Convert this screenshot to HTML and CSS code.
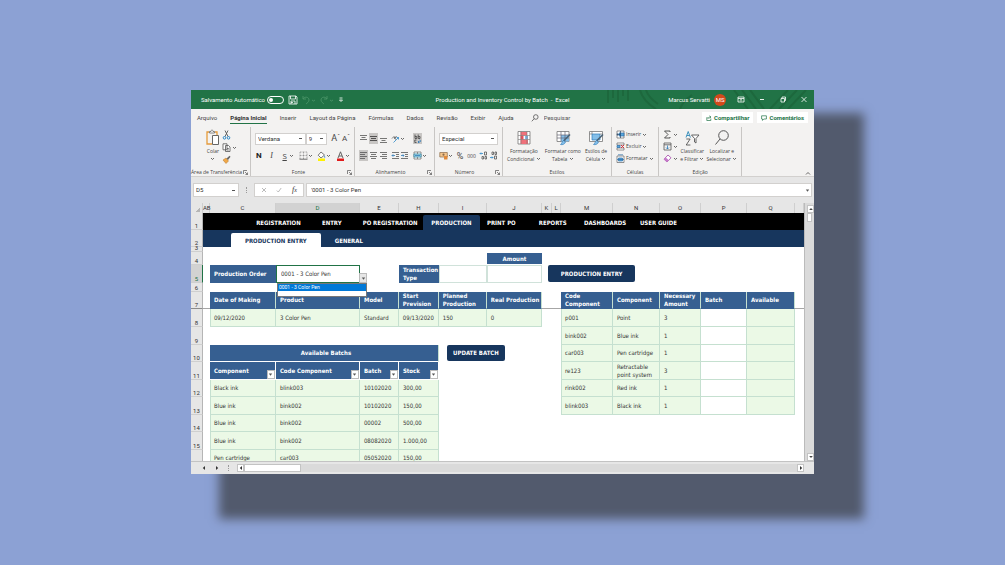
FILE: index.html
```
<!DOCTYPE html>
<html lang="pt-BR">
<head>
<meta charset="utf-8">
<title>Production and Inventory Control by Batch - Excel</title>
<link rel="stylesheet" href="styles.css">
</head>
<body>
<svg class="defs" aria-hidden="true">
  <symbol id="chev" viewBox="0 0 5 5"><path d="M1 2l1.500 1.500L4 2" fill="none" stroke="#444" stroke-width=".8"/></symbol>
  <symbol id="tri" viewBox="0 0 5 5"><path d="M.8 1.500h3.400L2.500 3.800z" fill="#555"/></symbol>
  <symbol id="launch" viewBox="0 0 5 5"><path d="M.5 4V.5H4M2 2l2.500 2.500M4.500 2.500v2h-2" fill="none" stroke="#555" stroke-width=".7"/></symbol>
  <symbol id="left" viewBox="0 0 6 6"><path d="M4 1v4L1.800 3z" fill="#333"/></symbol>
  <symbol id="right" viewBox="0 0 6 6"><path d="M2 1v4l2.200-2z" fill="#333"/></symbol>
  <symbol id="up" viewBox="0 0 6 6"><path d="M1.200 4h3.600L3 2z" fill="#444"/></symbol>
  <symbol id="down" viewBox="0 0 6 6"><path d="M1.200 2h3.600L3 4z" fill="#444"/></symbol>
  <symbol id="al-l" viewBox="0 0 9 9"><path d="M1 1.500h7M1 3.500h5M1 5.500h7M1 7.500h5" stroke="#555" stroke-width=".8"/></symbol>
  <symbol id="al-c" viewBox="0 0 9 9"><path d="M1 1.500h7M2 3.500h5M1 5.500h7M2 7.500h5" stroke="#555" stroke-width=".8"/></symbol>
  <symbol id="al-r" viewBox="0 0 9 9"><path d="M1 1.500h7M3 3.500h5M1 5.500h7M3 7.500h5" stroke="#555" stroke-width=".8"/></symbol>
  <symbol id="va-t" viewBox="0 0 9 9"><path d="M1 1.500h7M2.500 3.500h4M1 5.500h7" stroke="#555" stroke-width=".8"/></symbol>
  <symbol id="va-m" viewBox="0 0 9 9"><path d="M1 2.500h7M2 4.500h5M1 6.500h7" stroke="#444" stroke-width=".9"/></symbol>
  <symbol id="va-b" viewBox="0 0 9 9"><path d="M1 4.500h7M2.500 6.500h4M1 8.500h7" stroke="#555" stroke-width=".8"/></symbol>
</svg>

<main class="window">
  <header class="titlebar">
    <div class="quick">
      <label class="autosave">Salvamento Automático <input type="checkbox" class="toggle"></label>
      <button class="plain" aria-label="Salvar"><svg width="10" height="10" viewBox="0 0 10 10" fill="none" stroke="#fff" stroke-width=".8"><path d="M1 1h7l1 1v7H1zM2.500 1v3h5V1M3 9V6h4v3M3 7.500h2"/></svg></button>
      <button class="plain" aria-label="Desfazer"><svg width="14" height="10" viewBox="0 0 14 10" fill="none" stroke="#4a9468" stroke-width=".9"><path d="M1 1v3h3M1 4c2-3 6-2 6 1 0 2-2 3-3 4M10 5l1.500 1L13 5"/></svg></button>
      <button class="plain" aria-label="Refazer"><svg width="14" height="10" viewBox="0 0 14 10" fill="none" stroke="#4a9468" stroke-width=".9"><path d="M7 1v3H4M7 4C5 1 1 2 1 5c0 2 2 3 3 4M10 5l1.500 1L13 5"/></svg></button>
      <button class="plain" aria-label="Personalizar"><svg width="6" height="6" viewBox="0 0 6 6" fill="none" stroke="#fff" stroke-width=".8"><path d="M1.500 1h3M1.500 3L3 4.500 4.500 3z"/></svg></button>
    </div>
    <h1 class="doc">Production and Inventory Control by Batch &nbsp;-&nbsp; Excel</h1>
    <div class="account">
      <svg class="pattern" viewBox="0 0 210 19" fill="none" stroke="#1d683d" stroke-width="2"><path d="M4 0v13M9 0v8M14 0v12M19 0v6M24 0v11M36 0c2 8 8 14 16 19M42 0c2 6 6 10 12 14M76 19c2-6 6-10 12-14M130 0l14 19M138 0l14 19M146 0l14 19M166 19L184 0M175 19L193 0M184 19L202 0"/></svg>
      <span>Marcus Servatti</span><span class="avatar">MS</span>
      <div class="winbtns">
        <button class="plain" aria-label="Opções da faixa"><svg width="8" height="7" viewBox="0 0 8 7" fill="none" stroke="#fff" stroke-width=".8"><path d="M1 1h6v5H1zM1 2.500h6M4 5.500V3.500M3 4.300l1-1 1 1"/></svg></button>
        <button class="plain" aria-label="Minimizar"><svg width="8" height="7" viewBox="0 0 8 7" stroke="#fff" stroke-width=".9"><path d="M2 3.500h4"/></svg></button>
        <button class="plain" aria-label="Restaurar"><svg width="8" height="7" viewBox="0 0 8 7" fill="none" stroke="#fff" stroke-width=".8"><path d="M2 2.500h3.500V6H2zM3 2.500V1h3.500v3.500h-1"/></svg></button>
        <button class="plain" aria-label="Fechar"><svg width="8" height="7" viewBox="0 0 8 7" stroke="#fff" stroke-width=".8"><path d="M1.500 1l5 5M6.500 1l-5 5"/></svg></button>
      </div>
    </div>
  </header>

  <nav class="tabs">
    <a href="#">Arquivo</a><a href="#" class="on">Página Inicial</a><a href="#">Inserir</a><a href="#">Layout da Página</a><a href="#">Fórmulas</a><a href="#">Dados</a><a href="#">Revisão</a><a href="#">Exibir</a><a href="#">Ajuda</a>
    <label class="search"><svg width="8" height="8" viewBox="0 0 8 8" fill="none" stroke="#555" stroke-width=".8"><circle cx="4.800" cy="3" r="2.300"/><path d="M3.200 4.700L.8 7.300"/></svg><input type="text" placeholder="Pesquisar" aria-label="Pesquisar"></label>
    <button class="pill"><svg width="6" height="6" viewBox="0 0 6 6" fill="none" stroke="#217346" stroke-width=".7"><path d="M1.500 2.500H.8v3h4v-2M2 4c0-1.500 1-2 2.500-2M3.500.8L5 2 3.500 3.200"/></svg>Compartilhar</button>
    <button class="pill"><svg width="6" height="6" viewBox="0 0 6 6" fill="none" stroke="#217346" stroke-width=".7"><path d="M.6.8h4.800v3.200H2.800L1.500 5.400V4H.6z"/></svg>Comentários</button>
  </nav>

  <section class="ribbon">
    <div class="group">
      <div class="body clip">
        <button class="big"><svg width="16" height="17" viewBox="0 0 16 17" fill="none"><path d="M4 3H2v12h5M10 3h2v3" stroke="#e59b3c" stroke-width="1.300"/><path d="M4.500 4V2.500H6C6 .5 8 .5 8 2.500h1.500V4z" stroke="#666" stroke-width=".8" fill="#fff"/><path d="M7.500 6.500h6v9h-6z" fill="#fff" stroke="#666"/></svg>Colar<svg class="cv"><use href="#chev"/></svg></button>
        <div class="stack">
          <button class="ico" aria-label="Recortar"><svg width="9" height="10" viewBox="0 0 9 10" fill="none"><path d="M3 .5l3 6M6 .5l-3 6" stroke="#555" stroke-width=".9"/><circle cx="2.500" cy="7.800" r="1.300" stroke="#2b88c8"/><circle cx="6.500" cy="7.800" r="1.300" stroke="#2b88c8"/></svg></button>
          <button class="ico" aria-label="Copiar"><svg width="9" height="9" viewBox="0 0 9 9" fill="#fff" stroke="#555" stroke-width=".8"><path d="M1 .8h4v6H1zM3.500 2.500h3l1.500 1.500v4.500H3.500zM5 5.500h1.800M5 7h1.800"/></svg><svg class="cv"><use href="#chev"/></svg></button>
          <button class="ico" aria-label="Pincel"><svg width="9" height="9" viewBox="0 0 9 9"><path d="M1 5l3-2 2.500 3L4 8.500z" fill="#f0a848" stroke="#b57426" stroke-width=".5"/><path d="M4.500 3.500L7.500.8l1 1-2.500 3.200z" fill="#666"/></svg></button>
        </div>
      </div>
      <div class="glabel">Área de Transferência<svg class="ln"><use href="#launch"/></svg></div>
    </div>

    <div class="group">
      <div class="body">
        <div class="row fontrow">
          <select class="sel wide" aria-label="Fonte"><option>Verdana</option></select>
          <select class="sel narrow" aria-label="Tamanho"><option>9</option></select>
          <button class="ico grow" aria-label="Aumentar fonte">A<sup>ˆ</sup></button>
          <button class="ico shrink" aria-label="Diminuir fonte">A<sup>ˇ</sup></button>
        </div>
        <div class="row spread">
          <button class="ico b">N</button><button class="ico i">I</button>
          <button class="ico"><span class="u">S</span><svg class="cv"><use href="#chev"/></svg></button>
          <button class="ico" aria-label="Bordas"><svg width="9" height="9" viewBox="0 0 9 9" fill="none" stroke="#888" stroke-width=".7"><path d="M1 1h7v7M1 1v7M4.500 1v7M1 4.500h7" stroke-dasharray="1 .5"/><path d="M.5 8.200h8" stroke="#333"/></svg><svg class="cv"><use href="#chev"/></svg></button>
          <button class="ico" aria-label="Preenchimento"><svg width="9" height="10" viewBox="0 0 9 10"><path d="M4 1l3.500 3L4 7 1.200 4.200z" fill="#fff" stroke="#555" stroke-width=".8"/><path d="M7.500 4.500c1 1.500 1 2 .3 2.300-.8-.3-.8-.8-.3-2.300" fill="#2b88c8"/><path d="M1 7.500h7V10H1z" fill="#fff200"/></svg><svg class="cv"><use href="#chev"/></svg></button>
          <button class="ico" aria-label="Cor da fonte"><svg width="9" height="10" viewBox="0 0 9 10"><path d="M2 7L4.500.8 7 7M3 5h3" fill="none" stroke="#555" stroke-width=".9"/><path d="M1 7.500h7V10H1z" fill="#e11b1b"/></svg><svg class="cv"><use href="#chev"/></svg></button>
        </div>
      </div>
      <div class="glabel">Fonte<svg class="ln"><use href="#launch"/></svg></div>
    </div>

    <div class="group">
      <div class="body">
        <div class="row spread">
          <div class="trio"><button class="ico" aria-label="Superior"><svg width="9" height="9"><use href="#va-t"/></svg></button><button class="ico lit" aria-label="Meio"><svg width="9" height="9"><use href="#va-m"/></svg></button><button class="ico" aria-label="Inferior"><svg width="9" height="9"><use href="#va-b"/></svg></button></div>
          <div class="pair"><button class="ico" aria-label="Orientação"><svg width="9" height="9" viewBox="0 0 9 9" fill="none"><path d="M1 4.500l2-2 1.500 3M3.500 5l2-3" stroke="#555" stroke-width=".8"/><path d="M2.500 8.500l5-5M7.500 5.500v-2h-2" stroke="#2b88c8" stroke-width=".8"/></svg><svg class="cv"><use href="#chev"/></svg></button></div>
          <div class="last"><button class="ico lit" aria-label="Quebrar texto"><svg width="9" height="10" viewBox="0 0 9 10" fill="none" stroke-width=".8"><path d="M2 .5v4h1.800v-2H2M5.200 .5v4H7v-2H5.200M3.500 6H1.800v2.500h1.700" stroke="#444"/><path d="M5 8h2c1.200-.8.800-2-.5-2M6 7L5 8l1 1" stroke="#2b78b8"/></svg></button></div>
        </div>
        <div class="row spread">
          <div class="trio"><button class="ico lit" aria-label="Esquerda"><svg width="9" height="9"><use href="#al-l"/></svg></button><button class="ico" aria-label="Centro"><svg width="9" height="9"><use href="#al-c"/></svg></button><button class="ico" aria-label="Direita"><svg width="9" height="9"><use href="#al-r"/></svg></button></div>
          <div class="pair"><button class="ico" aria-label="Diminuir recuo"><svg width="9" height="9" viewBox="0 0 9 9" fill="none" stroke-width=".8"><path d="M1 1.500h7M5 3.500h3M5 5.500h3M1 7.500h7" stroke="#555"/><path d="M4 4.500H1M2.200 3.300L1 4.500l1.200 1.200" stroke="#2b78b8"/></svg></button><button class="ico" aria-label="Aumentar recuo"><svg width="9" height="9" viewBox="0 0 9 9" fill="none" stroke-width=".8"><path d="M1 1.500h7M5 3.500h3M5 5.500h3M1 7.500h7" stroke="#555"/><path d="M1 4.500h3M2.800 3.300L4 4.500 2.800 5.700" stroke="#2b78b8"/></svg></button></div>
          <div class="last"><button class="ico" aria-label="Mesclar"><svg width="9" height="9" viewBox="0 0 9 9" fill="none" stroke-width=".8"><path d="M1 1h7v7H1z" stroke="#777" fill="#fff"/><path d="M1 3h7v3H1z" fill="#b9e0ef" stroke="#2b88a8"/><path d="M4.500 1v2M4.500 6v2" stroke="#777"/><path d="M2 4.500h5" stroke="#2b78b8"/></svg><svg class="cv"><use href="#chev"/></svg></button></div>
        </div>
      </div>
      <div class="glabel">Alinhamento<svg class="ln"><use href="#launch"/></svg></div>
    </div>

    <div class="group">
      <div class="body">
        <div class="row"><select class="sel full" aria-label="Formato"><option>Especial</option></select></div>
        <div class="row spread">
          <button class="ico" aria-label="Moeda"><svg width="9" height="9" viewBox="0 0 9 9"><path d="M.8 1.500h7.500v4.500H.8z" fill="#f6c58c" stroke="#8a6a4a" stroke-width=".7"/><circle cx="4.500" cy="3.700" r="1.100" fill="#8a6a4a"/><path d="M5 5h3.500v3.500H5z" fill="#e08a3c"/></svg><svg class="cv"><use href="#chev"/></svg></button>
          <button class="ico pct">%</button><button class="ico zeros">000</button>
          <div class="trio"><button class="ico" aria-label="Aumentar casas"><svg width="9" height="9" viewBox="0 0 9 9" fill="none" stroke-width=".8"><path d="M4 2.500H1M2 1.500l-1 1 1 1" stroke="#2b88c8"/><path d="M5.500 1h2v3h-2zM3 5.500h1.500v2.500H3zM6 5.500h1.500v2.500H6z" stroke="#555"/></svg></button><button class="ico" aria-label="Diminuir casas"><svg width="9" height="9" viewBox="0 0 9 9" fill="none" stroke-width=".8"><path d="M1 6.500h3M3 5.500l1 1-1 1" stroke="#2b88c8"/><path d="M3 1h1.500v2.500H3zM6 1h1.500v2.500H6zM5.500 5h2v3h-2z" stroke="#555"/></svg></button></div>
        </div>
      </div>
      <div class="glabel">Número<svg class="ln"><use href="#launch"/></svg></div>
    </div>

    <div class="group">
      <div class="body bigs">
        <button class="big"><svg width="16" height="16" viewBox="0 0 16 16"><path d="M2 1.500h12v12.500H2z" fill="#fff" stroke="#777" stroke-width=".8"/><path d="M4.500 2h6.500v3.500H4.500zM4.500 9.500h7.500V14H4.500z" fill="#f0707a"/><path d="M4.500 5.500h3v4h-3z" fill="#e8505b"/><path d="M9 6h3v3H9z" fill="#7fb6e6"/><path d="M5 1.500V14M11 1.500V14M2 5.500h12M2 9.500h12" stroke="#777" stroke-width=".6"/></svg><span>Formatação<br>Condicional <svg class="ci"><use href="#chev"/></svg></span></button>
        <button class="big"><svg width="16" height="16" viewBox="0 0 16 16"><path d="M2 1.500h12v10H2z" fill="#fff" stroke="#777" stroke-width=".8"/><path d="M6 5h8v6.500H6z" fill="#84bfe9"/><path d="M6 1.500v10M10 1.500v10M2 5h12M2 8h12" stroke="#667" stroke-width=".7"/><path d="M15 4.500L8.500 11" stroke="#4a6275" stroke-width="1.600"/><path d="M8.500 10.500l2 1.500c-1 2.500-3 3-5 2.500 1.500-1 1.500-3 3-4" fill="#84bfe9" stroke="#2b78b8" stroke-width=".6"/></svg><span>Formatar como<br>Tabela <svg class="ci"><use href="#chev"/></svg></span></button>
        <button class="big"><svg width="16" height="16" viewBox="0 0 16 16"><path d="M1.500 1.500h13v10h-13z" fill="#fff" stroke="#777" stroke-width=".8"/><path d="M4 4h8v6H4z" fill="#84bfe9" stroke="#2b78b8" stroke-width=".7"/><path d="M1.500 4H4M12 4h2.500M4 1.500V4" stroke="#777" stroke-width=".7"/><path d="M15 4.500L8.500 11" stroke="#4a6275" stroke-width="1.600"/><path d="M8.500 10.500l2 1.500c-1 2.500-3 3-5 2.500 1.500-1 1.500-3 3-4" fill="#84bfe9" stroke="#2b78b8" stroke-width=".6"/></svg><span>Estilos de<br>Célula <svg class="ci"><use href="#chev"/></svg></span></button>
      </div>
      <div class="glabel">Estilos</div>
    </div>

    <div class="group">
      <div class="body stack cells">
        <button class="ico"><svg width="9" height="9" viewBox="0 0 9 9" stroke-width=".7"><path d="M1 1h7v7H1z" fill="#fff" stroke="#666"/><path d="M3 3h5v3H3z" fill="#5aa7dd" stroke="#2b6fa8"/><path d="M4.500 1v7M1 4.500h3M2 3.500l-1.200 1L2 5.500" stroke="#246" fill="none"/></svg>Inserir <svg class="cv"><use href="#chev"/></svg></button>
        <button class="ico"><svg width="9" height="9" viewBox="0 0 9 9" stroke-width=".7"><path d="M1 1h7v2H1zM1 6h7v2H1z" fill="#fff" stroke="#666"/><path d="M1 3.500h3v2H1z" fill="#5aa7dd" stroke="#2b6fa8"/><path d="M5 3l3 3M8 3L5 6" stroke="#d6323c" stroke-width="1"/></svg>Excluir <svg class="cv"><use href="#chev"/></svg></button>
        <button class="ico"><svg width="9" height="9" viewBox="0 0 9 9" stroke-width=".7"><path d="M1 2h7v6.500H1z" fill="#fff" stroke="#666"/><path d="M2.500 4h4v3h-4z" fill="#5aa7dd" stroke="#2b6fa8"/><path d="M2 .8h5M1 5.500h7" stroke="#2b6fa8"/></svg>Formatar <svg class="cv"><use href="#chev"/></svg></button>
      </div>
      <div class="glabel">Células</div>
    </div>

    <div class="group">
      <div class="body edit">
        <div class="stack">
          <button class="ico" aria-label="Soma"><svg width="9" height="9" viewBox="0 0 9 9" fill="none" stroke="#444" stroke-width=".9"><path d="M7 2V1H1.500L5 4.500 1.500 8H7V7"/></svg><svg class="cv"><use href="#chev"/></svg></button>
          <button class="ico" aria-label="Preencher"><svg width="9" height="9" viewBox="0 0 9 9" fill="none" stroke-width=".8"><path d="M1 1h7v7H1zM1 2.800h7" stroke="#555"/><path d="M4.500 3.500V7M3 5.500L4.500 7 6 5.500" stroke="#2b78b8"/></svg><svg class="cv"><use href="#chev"/></svg></button>
          <button class="ico" aria-label="Limpar"><svg width="9" height="9" viewBox="0 0 9 9"><path d="M5 1l3 2.800L4 8 1 5.200z" fill="#fff" stroke="#a348a8" stroke-width=".8"/><path d="M1 5.200l1.800-1.800 3 2.800L4 8z" fill="#c679ca"/></svg><svg class="cv"><use href="#chev"/></svg></button>
        </div>
        <button class="big"><svg width="16" height="16" viewBox="0 0 16 16" fill="none"><path d="M2 7.500L4.200 1.500 6.400 7.500M2.800 5.500h2.800" stroke="#2b88b8" stroke-width=".9"/><path d="M2.300 9h3.800L2.200 15h4.200" stroke="#555" stroke-width=".9"/><path d="M7.500 5h7.500l-3 3.500V13l-1.500-1V8.500z" fill="#fff" stroke="#555" stroke-width=".9"/></svg><span>Classificar<br>e Filtrar <svg class="ci"><use href="#chev"/></svg></span></button>
        <button class="big"><svg width="16" height="16" viewBox="0 0 16 16" fill="none" stroke="#555" stroke-width="1"><circle cx="9.500" cy="5.500" r="4.800"/><path d="M6 9L1.500 14.500"/></svg><span>Localizar e<br>Selecionar <svg class="ci"><use href="#chev"/></svg></span></button>
      </div>
      <div class="glabel">Edição</div>
    </div>
    <button class="plain collapse" aria-label="Recolher"><svg width="6" height="5" viewBox="0 0 6 5" fill="none" stroke="#444" stroke-width=".8"><path d="M1 3.500l2-2 2 2"/></svg></button>
  </section>

  <section class="formula">
    <select class="sel namebox" aria-label="Caixa de nome"><option>D5</option></select>
    <span class="dots"></span>
    <div class="fx">
      <svg width="6" height="6" viewBox="0 0 6 6" stroke="#aaa" stroke-width=".8"><path d="M1 1l4 4M5 1L1 5"/></svg>
      <svg width="6" height="6" viewBox="0 0 6 6" fill="none" stroke="#aaa" stroke-width=".8"><path d="M.8 3.500l1.500 1.500L5.200 1"/></svg>
      <i>f<small>x</small></i>
    </div>
    <div class="fbar"><input type="text" value="'0001 - 3 Color Pen" aria-label="Barra de fórmulas"><svg class="cv"><use href="#tri"/></svg></div>
  </section>

  <div class="work">
    <div class="sheet">
      <div class="cols"><span class="corner"></span><span>AB</span><span>C</span><span class="cur">D</span><span>E</span><span>H</span><span>I</span><span>J</span><span>K</span><span>L</span><span>M</span><span>N</span><span>O</span><span>P</span><span>Q</span><span></span></div>
      <div class="rows"><span>1</span><span>2</span><span>3</span><span>4</span><span class="cur">5</span><span>6</span><span class="frozen">7</span><span>8</span><span>9</span><span>10</span><span>11</span><span>12</span><span>13</span><span>14</span><span>15</span><span>16</span></div>

      <nav class="menu">
        <a href="#">REGISTRATION</a><a href="#">ENTRY</a><a href="#">PO REGISTRATION</a><a href="#" class="on">PRODUCTION</a><a href="#">PRINT PO</a><a href="#">REPORTS</a><a href="#">DASHBOARDS</a><a href="#">USER GUIDE</a>
      </nav>
      <nav class="submenu"><a href="#" class="on">PRODUCTION ENTRY</a><a href="#">GENERAL</a></nav>
      <div class="freeze"></div>

      <label class="head po-label" for="po">Production Order</label>
      <div class="po">
        <select id="po"><option>0001 - 3 Color Pen</option></select>
        <span class="drop"><svg class="cv"><use href="#tri"/></svg></span>
        <ul class="list"><li>0001 - 3 Color Pen</li></ul>
      </div>
      <label class="head tt-label" for="tt">Transaction Type</label>
      <input id="tt" class="tt" type="text">
      <label class="head am-label" for="am">Amount</label>
      <input id="am" class="am" type="text">
      <button class="navy entry">PRODUCTION ENTRY</button>
      <button class="navy update">UPDATE BATCH</button>

      <table class="grid order">
        <colgroup><col class="w-c"><col class="w-d"><col class="w-e"><col class="w-h"><col class="w-i"><col class="w-j"></colgroup>
        <tr class="h17"><th>Date of Making</th><th>Product</th><th>Model</th><th>Start Prevision</th><th>Planned Production</th><th>Real Production</th></tr>
        <tr class="h18"><td>09/12/2020</td><td>3 Color Pen</td><td>Standard</td><td>09/13/2020</td><td>150</td><td>0</td></tr>
      </table>

      <table class="grid comps">
        <colgroup><col class="w-m"><col class="w-n"><col class="w-o"><col class="w-p"><col class="w-q"></colgroup>
        <tr class="h17"><th>Code Component</th><th>Component</th><th>Necessary Amount</th><th>Batch</th><th>Available</th></tr>
        <tr class="h18"><td>p001</td><td>Point</td><td>3</td><td class="open"></td><td></td></tr>
        <tr class="h18"><td>bink002</td><td>Blue ink</td><td>1</td><td class="open"></td><td></td></tr>
        <tr class="h17"><td>car003</td><td>Pen cartridge</td><td>1</td><td class="open"></td><td></td></tr>
        <tr class="h18"><td>re123</td><td>Retractable point system</td><td>3</td><td class="open"></td><td></td></tr>
        <tr class="h17"><td>rink002</td><td>Red ink</td><td>1</td><td class="open"></td><td></td></tr>
        <tr class="h18"><td>blink003</td><td>Black ink</td><td>1</td><td class="open"></td><td></td></tr>
      </table>

      <table class="grid batches">
        <colgroup><col class="b-c"><col class="b-d"><col class="b-e"><col class="b-h"></colgroup>
        <tr class="h17"><th colspan="4" class="title">Available Batchs</th></tr>
        <tr class="h18 filters">
          <th><div>Component<button class="filter" aria-label="Filtrar"><svg class="cv"><use href="#tri"/></svg></button></div></th>
          <th><div>Code Component<button class="filter" aria-label="Filtrar"><svg class="cv"><use href="#tri"/></svg></button></div></th>
          <th><div>Batch<button class="filter" aria-label="Filtrar"><svg class="cv"><use href="#tri"/></svg></button></div></th>
          <th><div>Stock<button class="filter" aria-label="Filtrar"><svg class="cv"><use href="#tri"/></svg></button></div></th>
        </tr>
        <tr class="h17"><td>Black ink</td><td>blink003</td><td>10102020</td><td>300,00</td></tr>
        <tr class="h18"><td>Blue ink</td><td>bink002</td><td>10102020</td><td>150,00</td></tr>
        <tr class="h17"><td>Blue ink</td><td>bink002</td><td>00002</td><td>500,00</td></tr>
        <tr class="h18"><td>Blue ink</td><td>bink002</td><td>08082020</td><td>1.000,00</td></tr>
        <tr class="h17"><td>Pen cartridge</td><td>car003</td><td>05052020</td><td>150,00</td></tr>
      </table>
    </div>
    <div class="vscroll">
      <button aria-label="Subir"><svg width="6" height="6"><use href="#up"/></svg></button>
      <span class="thumb"></span>
      <button class="end" aria-label="Descer"><svg width="6" height="6"><use href="#down"/></svg></button>
    </div>
  </div>

  <footer class="bottom">
    <button class="plain" aria-label="Anterior"><svg width="6" height="6"><use href="#left"/></svg></button>
    <button class="plain" aria-label="Próxima"><svg width="6" height="6"><use href="#right"/></svg></button>
    <span class="dots"></span>
    <div class="hscroll">
      <button aria-label="Esquerda"><svg width="6" height="6"><use href="#left"/></svg></button>
      <span class="thumb"></span>
      <button class="end" aria-label="Direita"><svg width="6" height="6"><use href="#right"/></svg></button>
    </div>
  </footer>
</main>
</body>
</html>
```

FILE: styles.css
```
* { box-sizing: border-box; }

body {
  margin: 0;
  padding: 90px 19%;
  background: #8ca1d4;
  color: #444;
  font: 6px/8px Roboto, sans-serif;
}

button, input, select {
  margin: 0;
  padding: 0;
  border: 0;
  background: none;
  color: inherit;
  font: inherit;
  border-radius: 0;
  outline: 0;
}

a { color: inherit; text-decoration: none; }
svg { display: block; flex: none; }
.defs { display: none; }
.cv, .ci, .ln { width: 5px; height: 5px; }
.ci { display: inline-block; }

.window {
  background: #f3f2f1;
  box-shadow: 39px 34px 10px 11px #525a6d;
}

/* Title bar */
.titlebar {
  display: grid;
  grid-template-columns: 1fr auto 1fr;
  align-items: center;
  height: 19px;
  background: #217346;
  color: #fff;
}
.doc { margin: 0; font-size: 6px; font-weight: 400; }
.quick { display: flex; align-items: center; gap: 4px; padding-left: 10px; }
.autosave { display: flex; align-items: center; gap: 2px; }
.toggle {
  appearance: none;
  display: flex;
  align-items: center;
  width: 17px;
  height: 8px;
  border: 1px solid #fff;
  border-radius: 4px;
}
.toggle::before {
  content: "";
  width: 4px;
  height: 4px;
  margin-left: 1px;
  border-radius: 50%;
  background: #fff;
}
.account {
  position: relative;
  display: flex;
  align-items: center;
  justify-content: flex-end;
  gap: 4px;
  height: 19px;
  padding-right: 6px;
}
.account > span { position: relative; }
.pattern { position: absolute; right: 0; top: 0; height: 19px; }
.avatar {
  width: 12px;
  height: 12px;
  border-radius: 50%;
  background: #d2491b;
  line-height: 12px;
  text-align: center;
}
.winbtns { position: relative; display: flex; gap: 13px; padding-left: 7px; }

/* Ribbon tabs */
.tabs {
  display: flex;
  align-items: center;
  gap: 13px;
  height: 17px;
  padding: 0 6px;
  line-height: 9px;
}
.tabs a { padding: 1px 0; border-bottom: 1px solid transparent; white-space: nowrap; }
.tabs .on { border-color: #217346; color: #303030; font-weight: 700; }
.search { display: flex; flex: 1; align-items: center; gap: 5px; padding-left: 4px; }
.search input { width: 60px; }
.search input::placeholder { color: #555; opacity: 1; }
.pill {
  display: flex;
  align-items: center;
  gap: 2px;
  height: 11px;
  margin-left: -9px;
  padding: 0 4px;
  background: #fff;
  color: #217346;
  font-weight: 700;
}

/* Ribbon */
.ribbon {
  display: grid;
  grid-template-columns: 60fr 104fr 80fr 68fr 109fr 47fr 83fr 72fr;
  height: 51px;
  border-bottom: 1px solid #d2d0ce;
  font: 5px/8px "Open Sans", sans-serif;
  white-space: nowrap;
}
.group {
  display: flex;
  flex-direction: column;
  min-width: 0;
  margin-top: 1px;
  border-right: 1px solid #c8c6c4;
}
.body { flex: 1; padding: 3px 4px 0; }
.glabel { position: relative; height: 8px; text-align: center; }
.glabel .ln { position: absolute; right: 2px; top: 2px; }
.glabel:has(.ln) { padding-right: 8px; }
.row { display: flex; align-items: center; height: 17px; }
.spread { justify-content: space-between; }
.ico { display: flex; align-items: center; justify-content: center; min-width: 8px; height: 11px; }
.lit { background: #c8c6c4; }
.b { color: #222; font: 700 8px/10px Roboto, sans-serif; }
.i { font: italic 8px/10px "Liberation Serif", serif; }
.u { width: 9px; font-size: 8px; text-decoration: underline; }
.pct { font: 9px/10px Roboto, sans-serif; }
.zeros { font-size: 5px; }
.trio { display: flex; gap: 1px; }
.pair { display: flex; width: 18px; }
.last { width: 17px; }
.sel {
  appearance: none;
  height: 12px;
  padding: 0 2px;
  border: 1px solid #d2d0ce;
  background: #fff linear-gradient(#555, #555) right 3px center / 3px 1px no-repeat;
  color: #333;
  font: 6px/10px Roboto, sans-serif;
}
.wide { flex: 55; min-width: 0; }
.narrow { flex: 19; min-width: 0; }
.full { width: 100%; }
.grow, .shrink { align-items: flex-start; margin-left: 4px; font: 9px/11px Roboto, sans-serif; }
.shrink { margin-left: 2px; font-size: 8px; }
.grow sup, .shrink sup { font-size: 6px; line-height: 6px; }
.big {
  display: flex;
  flex-direction: column;
  align-items: center;
  gap: 1px;
  line-height: 8px;
}
.stack { display: flex; flex-direction: column; align-items: flex-start; }
.stack .ico { height: 12px; justify-content: flex-start; gap: 1px; }
.clip { display: flex; gap: 1px; padding: 2px 12px 0 14px; }
.bigs { display: flex; justify-content: space-between; align-items: flex-start; padding: 3px 4px 0; }
.cells { padding-top: 1px; }
.edit { display: flex; justify-content: space-between; align-items: flex-start; padding: 1px 4px 0; }
.edit .big { padding-top: 2px; }
.collapse { align-self: end; justify-self: end; margin: 0 3px 0 0; }

/* Formula bar */
.formula {
  display: flex;
  align-items: center;
  gap: 2px;
  height: 26px;
  padding: 0 2px;
  background: #e6e6e6;
}
.namebox { width: 46px; height: 14px; }
.dots { display: grid; justify-content: center; width: 11px; }
.dots::before { content: ""; height: 6px; border-left: 1px dotted #999; }
.fx, .fbar { display: flex; align-items: center; height: 14px; border: 1px solid #d2d0ce; background: #fff; }
.fx { justify-content: space-between; width: 50px; padding: 0 6px; }
.fx i { color: #333; font: italic 8px/8px "Liberation Serif", serif; }
.fx small { font-size: 6px; }
.fbar { flex: 1; padding: 0 1px 0 4px; color: #333; }
.fbar input { flex: 1; min-width: 0; }

/* Worksheet */
.work { display: flex; height: 258px; overflow: hidden; background: #e6e6e6; }
.sheet {
  flex: 1;
  min-width: 0;
  display: grid;
  grid-template-columns:
    12px minmax(0, 7fr) minmax(0, 66fr) minmax(0, 84fr) minmax(0, 39fr) minmax(0, 40fr)
    minmax(0, 48fr) minmax(0, 55fr) minmax(0, 10fr) minmax(0, 9fr) minmax(0, 52fr)
    minmax(0, 47fr) minmax(0, 41fr) minmax(0, 46fr) minmax(0, 48fr) minmax(0, 9fr);
  grid-template-rows: 10px 17px 17px 5px 13px 18px 9px 17px 18px 18px 17px 18px 17px 18px 17px 18px 17px;
  background: #fff;
  color: #333;
  font: 6px/8px "DejaVu Sans Condensed", "DejaVu Sans", sans-serif;
}
.cols, .rows { display: grid; background: #e6e6e6; font: 6px/10px Roboto, sans-serif; }
.cols { grid-area: 1 / 1 / 2 / 17; grid-template-columns: subgrid; text-align: center; }
.cols span { border-right: 1px solid #cfcfcf; white-space: nowrap; }
.cols .cur { background: #d2d2d2; border-bottom: 1px solid #217346; color: #217346; }
.corner { background: linear-gradient(135deg, transparent 60%, #b5b5b5 60%) right 2px bottom 2px / 6px 6px no-repeat; }
.rows { grid-area: 2 / 1 / 18 / 2; grid-template-rows: subgrid; }
.rows span {
  display: flex;
  align-items: flex-end;
  justify-content: center;
  border-right: 1px solid #b5b5b5;
  border-bottom: 1px solid #cfcfcf;
  line-height: 6px;
}
.rows .cur { background: #d2d2d2; border-right-color: #217346; color: #217346; }
.rows .frozen { border-bottom-color: #8c8c8c; }
.freeze { grid-area: 8 / 2 / 9 / 17; border-bottom: 1px solid #a6a6a6; }

.menu, .submenu { color: #fff; font-weight: 700; }
.menu {
  grid-area: 2 / 2 / 3 / 17;
  display: grid;
  grid-template-columns: 55fr 52fr 65fr 58fr 42fr 61fr 44fr 63fr;
  padding: 2px 19% 0 8%;
  background: #000;
}
.menu a { line-height: 16px; text-align: center; white-space: nowrap; }
.menu .on { border-radius: 2px 2px 0 0; background: #17365d; }
.submenu { grid-area: 3 / 2 / 4 / 17; display: flex; padding: 3px 0 0 28px; background: #17365d; line-height: 15px; }
.submenu a { padding: 0 14px; }
.submenu .on { border-radius: 2px 2px 0 0; background: #fff; color: #17365d; }

.head { padding: 0 4px; background: #365f91; color: #fff; font-weight: 700; }
.po-label { grid-area: 6 / 3 / 7 / 4; line-height: 18px; white-space: nowrap; }
.po { grid-area: 6 / 4 / 7 / 5; position: relative; border: 1px solid #217346; }
.po select { appearance: none; width: 100%; height: 16px; padding-left: 4px; }
.drop {
  position: absolute;
  right: -8px;
  bottom: -1px;
  width: 8px;
  height: 10px;
  padding: 2px 1px;
  border: 1px solid #bbb;
  background: #e6e6e6;
}
.drop .cv, .filter .cv { margin: auto; }
.list {
  position: absolute;
  z-index: 1;
  top: 17px;
  left: 0;
  right: -8px;
  height: 14px;
  margin: 0;
  padding: 0;
  border: 1px solid #777;
  background: #fff;
  list-style: none;
}
.list li { padding-left: 1px; background: #0078d7; color: #fff; font: 5px/7px Roboto, sans-serif; }
.tt-label { grid-area: 6 / 6 / 7 / 7; padding-top: 1px; }
.tt, .am { width: 100%; border: 1px solid #d0e2da; }
.tt { grid-area: 6 / 7 / 7 / 8; }
.am { grid-area: 6 / 8 / 7 / 9; }
.am-label { grid-area: 5 / 8 / 6 / 9; margin: 1px 0; line-height: 11px; text-align: center; }
.navy { border-radius: 2px; background: #17365d; color: #fff; font-weight: 700; white-space: nowrap; }
.entry { grid-area: 6 / 9 / 7 / 13; margin: 0 21% 1px 6px; }
.update { grid-area: 11 / 7 / 12 / 9; margin: 0 36% 1px 8px; }

.grid { width: 100%; table-layout: fixed; border-collapse: separate; border-spacing: 0; align-self: start; line-height: 8px; }
.order { grid-area: 8 / 3 / 10 / 9; }
.comps { grid-area: 8 / 11 / 15 / 16; }
.batches { grid-area: 11 / 3 / 18 / 7; }
.grid td, .grid th { padding: 0 0 0 4px; border-right: 1px solid #c5e0d0; border-bottom: 1px solid #c5e0d0; text-align: left; }
.grid td { background: #ebf9e6; }
.grid .open { background: #fff; }
.grid td:first-child { border-left: 1px solid #c5e0d0; padding-left: 3px; }
.grid th { border-bottom-color: #365f91; background: #365f91; color: #fff; font-weight: 700; }
.grid .title { border-bottom-color: #fff; text-align: center; }
.filters th { border-right: 1px solid #fff; border-bottom-color: #fff; white-space: nowrap; }
.filters div { display: flex; justify-content: space-between; align-items: center; height: 17px; }
.filter { align-self: flex-end; width: 8px; height: 9px; border: 1px solid #bbb; background: #fff; }
.h17 { height: 17px; }
.h18 { height: 18px; }
.w-c { width: 19.9%; } .w-d { width: 25.3%; } .w-e { width: 11.7%; } .w-h { width: 12%; } .w-i { width: 14.5%; } .w-j { width: 16.6%; }
.w-m { width: 22.2%; } .w-n { width: 20.1%; } .w-o { width: 17.5%; } .w-p { width: 19.7%; } .w-q { width: 20.5%; }
.b-c { width: 28.8%; } .b-d { width: 36.7%; } .b-e { width: 17%; } .b-h { width: 17.5%; }

/* Scroll bars */
.vscroll { display: flex; flex-direction: column; width: 10px; padding: 2px 2px 0; border-left: 1px solid #bbb; background: #dadada; }
.vscroll button, .hscroll button { display: grid; place-items: center; width: 7px; height: 8px; border: 1px solid #c3c3c3; background: #fff; }
.vscroll .thumb { height: 9px; border: 1px solid #c3c3c3; background: #fff; }
.vscroll .end { margin-top: auto; }
.bottom {
  display: flex;
  align-items: center;
  gap: 7px;
  height: 13px;
  padding: 0 10px;
  border-top: 1px solid #c3c3c3;
  background: #e6e6e6;
}
.bottom .dots { width: 3px; }
.hscroll { display: flex; flex: 1; background: #dadada; }
.hscroll .thumb { width: 10%; border: 1px solid #c3c3c3; background: #fff; }
.hscroll .end { margin-left: auto; }
```
